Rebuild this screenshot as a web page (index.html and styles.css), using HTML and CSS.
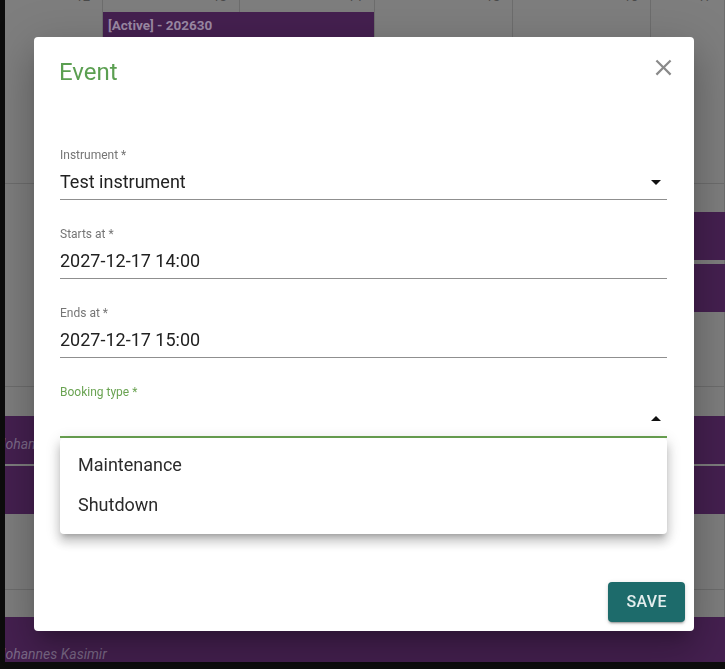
FILE: index.html
```html
<!DOCTYPE html>
<html lang="en">
<head>
    <meta charset="UTF-8">
    <meta name="viewport" content="width=device-width, initial-scale=1.0">
    <title>Booking - Event</title>
    <link rel="stylesheet" href="styles.css">
</head>
<body>
    <!-- Takvim (arka plan) -->
    <div class="calendar">
        <div class="cal-grid">
            <div class="cell"><span class="day">12</span></div>
            <div class="cell"><span class="day">13</span></div>
            <div class="cell"><span class="day">14</span></div>
            <div class="cell"><span class="day">15</span></div>
            <div class="cell"><span class="day">16</span></div>
            <div class="cell"><span class="day">17</span></div>
            <div class="cell"></div><div class="cell"></div><div class="cell"></div>
            <div class="cell"></div><div class="cell"></div><div class="cell"></div>
            <div class="cell"></div><div class="cell"></div><div class="cell"></div>
            <div class="cell"></div><div class="cell"></div><div class="cell"></div>
            <div class="cell"></div><div class="cell"></div><div class="cell"></div>
            <div class="cell"></div><div class="cell"></div><div class="cell"></div>
        </div>

        <div class="event event-active">[Active] - 202630</div>
        <div class="event event-r2a"></div>
        <div class="event event-r2b"></div>
        <div class="event event-r3a"><span class="owner">Johannes Kasimir</span></div>
        <div class="event event-r3b"></div>
        <div class="event event-r4"><span class="owner">Johannes Kasimir</span></div>
    </div>

    <!-- Dialog -->
    <div class="backdrop">
        <div class="dialog">
            <div class="dialog-title">
                <span>Event</span>
                <button class="close-btn" aria-label="close">
                    <svg viewBox="0 0 24 24" width="27" height="27"><path d="M19 6.41L17.59 5 12 10.59 6.41 5 5 6.41 10.59 12 5 17.59 6.41 19 12 13.41 17.59 19 19 17.59 13.41 12z"/></svg>
                </button>
            </div>

            <div class="dialog-content">
                <div class="field">
                    <label>Instrument *</label>
                    <div class="input">
                        <span>Test instrument</span>
                        <svg class="arrow" viewBox="0 0 24 24" width="24" height="24"><path d="M7 10l5 5 5-5z"/></svg>
                    </div>
                </div>

                <div class="field">
                    <label>Starts at *</label>
                    <div class="input"><span>2027-12-17 14:00</span></div>
                </div>

                <div class="field">
                    <label>Ends at *</label>
                    <div class="input"><span>2027-12-17 15:00</span></div>
                </div>

                <div class="field focused">
                    <label>Booking type *</label>
                    <div class="input">
                        <span></span>
                        <svg class="arrow" viewBox="0 0 24 24" width="24" height="24"><path d="M7 14l5-5 5 5z"/></svg>
                    </div>

                    <!-- Açılır menü -->
                    <ul class="menu">
                        <li>Maintenance</li>
                        <li>Shutdown</li>
                    </ul>
                </div>
            </div>

            <div class="dialog-actions">
                <button class="save-btn">Save</button>
            </div>
        </div>
    </div>
</body>
</html>
```

FILE: styles.css
```css
:root {
    --page-black: #0d0d0d;
    --cal-bg: #7e7e7e;
    --cal-line: #6d6d6d;
    --event-bg: #452050;
    --event-text: #9c8aa5;
    --owner-text: #7c6a88;
    --card-bg: #FFFFFF;
    --text-primary: #212121;
    --text-label: #757575;
    --underline: #8f8f8f;
    --accent-green: #5b9f51;
    --focus-green: #6aa352;
    --save-bg: #1d6b6b;
}

body {
    font-family: Roboto, 'Noto Sans', sans-serif;
    margin: 0;
    width: 725px;
    height: 669px;
    overflow: hidden;
    background-color: var(--page-black);
}

/* Takvim */
.calendar {
    position: relative;
    margin-left: 5px;
    width: 720px;
    height: 662px;
    overflow: hidden;
    background-color: var(--cal-bg);
}

.cal-grid {
    display: grid;
    grid-template-columns: 98px 137px 135px 138px 138px 1fr;
    grid-template-rows: 184px 203px 203px 1fr;
    height: 100%;
}

.cal-grid .cell {
    box-sizing: border-box;
    border-right: 1px solid var(--cal-line);
    border-bottom: 1px solid var(--cal-line);
    text-align: right;
    padding-right: 12px;
}

.cal-grid .day {
    display: block;
    margin-top: -11px;
    font-size: 13px;
    color: #4a4a4a;
}

.event {
    position: absolute;
    box-sizing: border-box;
    background-color: var(--event-bg);
    overflow: hidden;
    white-space: nowrap;
}

.event-active {
    left: 98px;
    top: 12px;
    width: 271px;
    height: 60px;
    padding: 5px 5px;
    font-size: 13.5px;
    line-height: 16px;
    font-weight: bold;
    color: var(--event-text);
}

.event-r2a { left: 646px; top: 212px; width: 80px; height: 48px; }
.event-r2b { left: 646px; top: 264px; width: 80px; height: 48px; }
.event-r3a { left: 0; top: 416px; width: 720px; height: 48px; padding-top: 20px; }
.event-r3b { left: 0; top: 466px; width: 720px; height: 48px; }
.event-r4 { left: 0; top: 617px; width: 720px; height: 45px; padding-top: 29px; }

.event .owner {
    display: block;
    margin-left: -7px;
    font-size: 14px;
    line-height: 17px;
    font-style: italic;
    color: var(--owner-text);
}

/* Dialog */
.backdrop {
    position: fixed;
    inset: 0;
    display: flex;
    justify-content: center;
    align-items: flex-start;
    padding-top: 37px;
    padding-left: 3px;
}

.dialog {
    width: 660px;
    height: 594px;
    background-color: var(--card-bg);
    border-radius: 4px;
    display: flex;
    flex-direction: column;
    box-shadow: 0 11px 15px -7px rgba(0, 0, 0, 0.2), 0 24px 38px 3px rgba(0, 0, 0, 0.14), 0 9px 46px 8px rgba(0, 0, 0, 0.12);
}

.dialog-title {
    display: flex;
    justify-content: space-between;
    align-items: flex-start;
    padding: 16px 24px 16px 25px;
    font-size: 24px;
    line-height: 38px;
    color: var(--accent-green);
}

.close-btn {
    border: none;
    background: none;
    padding: 0;
    margin: 1px -7px 0 0;
    width: 27px;
    height: 27px;
    fill: #8a8a8a;
    cursor: pointer;
}

.close-btn svg {
    display: block;
}

.dialog-content {
    flex-grow: 1;
    padding: 41px 27px 0 26px;
}

.field {
    position: relative;
    margin-bottom: 27px;
}

.field label {
    display: block;
    font-size: 12px;
    line-height: 14px;
    color: var(--text-label);
}

.field .input {
    display: flex;
    justify-content: space-between;
    align-items: center;
    margin-top: 8px;
    height: 24px;
    padding-bottom: 5px;
    font-size: 18px;
    line-height: 24px;
    color: var(--text-primary);
    border-bottom: 1px solid var(--underline);
}

.field .arrow {
    fill: #111;
    margin-right: -1px;
}

.field.focused label {
    color: var(--focus-green);
}

.field.focused .input {
    border-bottom: 2px solid var(--focus-green);
    margin-bottom: -1px;
}

/* Açılır menü */
.menu {
    position: absolute;
    top: 100%;
    left: 0;
    right: 0;
    margin: 0;
    padding: 7px 0 9px;
    list-style: none;
    background-color: var(--card-bg);
    border-radius: 4px;
    box-shadow: 0 5px 5px -3px rgba(0, 0, 0, 0.2), 0 8px 10px 1px rgba(0, 0, 0, 0.14), 0 3px 14px 2px rgba(0, 0, 0, 0.12);
    z-index: 10;
}

.menu li {
    padding: 8px 18px;
    font-size: 18px;
    line-height: 24px;
    color: #2b2b2b;
}

.dialog-actions {
    display: flex;
    justify-content: flex-end;
    padding: 8px 9px 9px 8px;
}

.save-btn {
    font-family: Roboto, 'Noto Sans', sans-serif;
    background-color: var(--save-bg);
    color: #e4eeee;
    border: none;
    border-radius: 4px;
    padding: 8px 18px;
    font-size: 16px;
    line-height: 24px;
    font-weight: 500;
    letter-spacing: 0.4px;
    text-transform: uppercase;
    box-shadow: 0 3px 1px -2px rgba(0, 0, 0, 0.2), 0 2px 2px 0 rgba(0, 0, 0, 0.14), 0 1px 5px 0 rgba(0, 0, 0, 0.12);
    cursor: pointer;
}
```
